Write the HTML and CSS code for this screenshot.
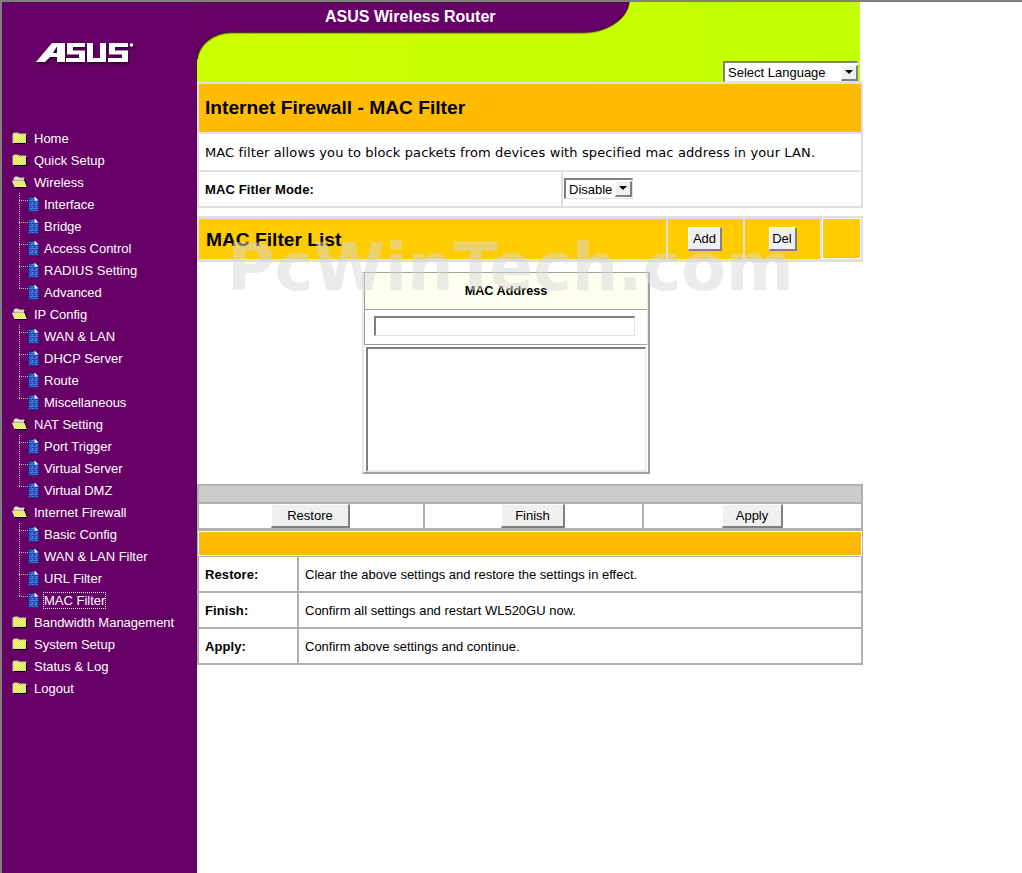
FILE: index.html
```html
<!DOCTYPE html>
<html lang="en">
<head>
<meta charset="utf-8">
<title>ASUS Wireless Router</title>
<link rel="stylesheet" href="styles.css">
</head>
<body>
<svg class="defs" width="0" height="0" aria-hidden="true">
  <defs>
    <pattern id="dither" width="2" height="2" patternUnits="userSpaceOnUse">
      <rect width="2" height="2" fill="#ffff66"/>
      <rect width="1" height="1" fill="#d8d870"/>
      <rect x="1" y="1" width="1" height="1" fill="#d8d870"/>
    </pattern>
    <pattern id="maze" width="4" height="4" patternUnits="userSpaceOnUse">
      <rect width="4" height="4" fill="#4a7ad8"/>
      <path d="M0 1.5H3V3.5H1" fill="none" stroke="#1a3aa8" stroke-width="1"/>
    </pattern>
    <symbol id="folder" viewBox="0 0 16 12">
      <path d="M1 2L2 1H6L7 2H14V11H1Z" fill="url(#dither)" stroke="#c8c8b0"/>
      <path d="M14.5 3V11.5H1.5" fill="none" stroke="#000"/>
    </symbol>
    <symbol id="folder-open" viewBox="0 0 16 12">
      <path d="M2 2L3 1H6L7 2H12V4H2Z" fill="#e8e8d0" stroke="#c8c8b0"/>
      <path d="M0.5 5H12L15 11H3Z" fill="url(#dither)" stroke="#e8e8d0"/>
      <path d="M12.5 3L15.5 11.5H3" fill="none" stroke="#000"/>
    </symbol>
    <symbol id="doc" viewBox="0 0 11 16">
      <path d="M0.5 1.5H7L10.5 5V15.5H0.5Z" fill="url(#maze)" stroke="#1c2f80"/>
      <path d="M6.5 0.5L10.5 4.5H6.5Z" fill="#fff"/>
    </symbol>
  </defs>
</svg>
<div class="page">
  <nav class="sidebar">
    <div class="logo">
      <svg class="logo-mark" width="100" height="24" viewBox="36 42 100 24" role="img" aria-label="ASUS">
        <path fill-rule="evenodd" d="M36 62L52 43H65V62H57V57H50L45 62ZM53 53H57V47H56.500Z"/>
        <path d="M67 43H85V47H73V50.500H85V62H66V58H79V54.500H67Z"/>
        <path d="M87 43H93V58H100V43H106V62H87Z"/>
        <path d="M109 43H128V47H115V50.500H128V62H108V58H122V54.500H109Z"/>
        <circle cx="131.500" cy="45" r="1.800"/>
      </svg>
    </div>
    <ul class="tree">
      <li class="node"><svg class="ico"><use href="#folder"/></svg><span>Home</span></li>
      <li class="node"><svg class="ico"><use href="#folder"/></svg><span>Quick Setup</span></li>
      <li class="node"><svg class="ico"><use href="#folder-open"/></svg><span>Wireless</span></li>
      <li class="leaf"><svg class="branch"><path class="dots" d="M0.500 0V22M0 7.500H9"/><use href="#doc" x="9" y="3" width="11" height="16"/></svg><span>Interface</span></li>
      <li class="leaf"><svg class="branch"><path class="dots" d="M0.500 0V22M0 7.500H9"/><use href="#doc" x="9" y="3" width="11" height="16"/></svg><span>Bridge</span></li>
      <li class="leaf"><svg class="branch"><path class="dots" d="M0.500 0V22M0 7.500H9"/><use href="#doc" x="9" y="3" width="11" height="16"/></svg><span>Access Control</span></li>
      <li class="leaf"><svg class="branch"><path class="dots" d="M0.500 0V22M0 7.500H9"/><use href="#doc" x="9" y="3" width="11" height="16"/></svg><span>RADIUS Setting</span></li>
      <li class="leaf"><svg class="branch"><path class="dots" d="M0.500 0V8M0 7.500H9"/><use href="#doc" x="9" y="3" width="11" height="16"/></svg><span>Advanced</span></li>
      <li class="node"><svg class="ico"><use href="#folder-open"/></svg><span>IP Config</span></li>
      <li class="leaf"><svg class="branch"><path class="dots" d="M0.500 0V22M0 7.500H9"/><use href="#doc" x="9" y="3" width="11" height="16"/></svg><span>WAN &amp; LAN</span></li>
      <li class="leaf"><svg class="branch"><path class="dots" d="M0.500 0V22M0 7.500H9"/><use href="#doc" x="9" y="3" width="11" height="16"/></svg><span>DHCP Server</span></li>
      <li class="leaf"><svg class="branch"><path class="dots" d="M0.500 0V22M0 7.500H9"/><use href="#doc" x="9" y="3" width="11" height="16"/></svg><span>Route</span></li>
      <li class="leaf"><svg class="branch"><path class="dots" d="M0.500 0V8M0 7.500H9"/><use href="#doc" x="9" y="3" width="11" height="16"/></svg><span>Miscellaneous</span></li>
      <li class="node"><svg class="ico"><use href="#folder-open"/></svg><span>NAT Setting</span></li>
      <li class="leaf"><svg class="branch"><path class="dots" d="M0.500 0V22M0 7.500H9"/><use href="#doc" x="9" y="3" width="11" height="16"/></svg><span>Port Trigger</span></li>
      <li class="leaf"><svg class="branch"><path class="dots" d="M0.500 0V22M0 7.500H9"/><use href="#doc" x="9" y="3" width="11" height="16"/></svg><span>Virtual Server</span></li>
      <li class="leaf"><svg class="branch"><path class="dots" d="M0.500 0V8M0 7.500H9"/><use href="#doc" x="9" y="3" width="11" height="16"/></svg><span>Virtual DMZ</span></li>
      <li class="node"><svg class="ico"><use href="#folder-open"/></svg><span>Internet Firewall</span></li>
      <li class="leaf"><svg class="branch"><path class="dots" d="M0.500 0V22M0 7.500H9"/><use href="#doc" x="9" y="3" width="11" height="16"/></svg><span>Basic Config</span></li>
      <li class="leaf"><svg class="branch"><path class="dots" d="M0.500 0V22M0 7.500H9"/><use href="#doc" x="9" y="3" width="11" height="16"/></svg><span>WAN &amp; LAN Filter</span></li>
      <li class="leaf"><svg class="branch"><path class="dots" d="M0.500 0V22M0 7.500H9"/><use href="#doc" x="9" y="3" width="11" height="16"/></svg><span>URL Filter</span></li>
      <li class="leaf"><svg class="branch"><path class="dots" d="M0.500 0V8M0 7.500H9"/><use href="#doc" x="9" y="3" width="11" height="16"/></svg><span class="current">MAC Filter</span></li>
      <li class="node"><svg class="ico"><use href="#folder"/></svg><span>Bandwidth Management</span></li>
      <li class="node"><svg class="ico"><use href="#folder"/></svg><span>System Setup</span></li>
      <li class="node"><svg class="ico"><use href="#folder"/></svg><span>Status &amp; Log</span></li>
      <li class="node"><svg class="ico"><use href="#folder"/></svg><span>Logout</span></li>
    </ul>
  </nav>

  <main class="main">
    <header class="banner">
      <svg class="banner-art" width="663" height="80" viewBox="197 2 663 80" aria-hidden="true">
        <defs>
          <linearGradient id="lime" x1="0" x2="1" y1="0" y2="0">
            <stop offset="0" stop-color="#ccff00"/>
            <stop offset="1" stop-color="#c2ff00"/>
          </linearGradient>
        </defs>
        <rect x="197" y="2" width="663" height="80" fill="url(#lime)"/>
        <path class="glow" d="M197 2H629C627 20 606 33 583 33H232C213 33 199 45 197 60Z"/>
        <path class="edge" d="M197 2H629C627 20 606 32 583 32H232C213 32 199 44 197 59Z"/>
        <rect x="190" y="0" width="7" height="70" fill="#660066"/>
        <rect x="190" y="0" width="445" height="2" fill="#660066"/>
      </svg>
      <div class="banner-title">ASUS Wireless Router</div>
      <div class="lang">
        <select class="select select-lang"><option>Select Language</option></select>
        <span class="arrow"></span>
      </div>
    </header>

    <section class="panel">
      <h1 class="title-row">Internet Firewall - MAC Filter</h1>
      <p class="desc-row">MAC filter allows you to block packets from devices with specified mac address in your LAN.</p>
      <div class="mode-row">
        <div class="mode-label">MAC Fitler Mode:</div>
        <div class="mode-value">
          <div class="mode-select">
            <select class="select select-mode"><option>Disable</option></select>
            <span class="arrow"></span>
          </div>
        </div>
      </div>
    </section>

    <section class="list-head">
      <h2 class="list-title">MAC Filter List</h2>
      <div class="list-cell"><button class="btn btn-add" type="button">Add</button></div>
      <div class="list-cell"><button class="btn btn-del" type="button">Del</button></div>
      <div class="list-cell list-end"></div>
    </section>

    <div class="mac-wrap">
      <div class="mac-box">
        <div class="mac-inner">
          <div class="mac-head">MAC Address</div>
          <div class="mac-input"><input class="mac-field" type="text"></div>
        </div>
        <textarea class="mac-area"></textarea>
      </div>
    </div>

    <section class="actions">
      <div class="band"></div>
      <div class="btn-row">
        <div class="btn-cell"><button class="btn btn-restore" type="button">Restore</button></div>
        <div class="btn-cell"><button class="btn btn-finish" type="button">Finish</button></div>
        <div class="btn-cell"><button class="btn btn-apply" type="button">Apply</button></div>
      </div>
      <div class="orange"></div>
      <div class="info-row"><div class="info-key">Restore:</div><div class="info-val">Clear the above settings and restore the settings in effect.</div></div>
      <div class="info-row"><div class="info-key">Finish:</div><div class="info-val">Confirm all settings and restart WL520GU now.</div></div>
      <div class="info-row"><div class="info-key">Apply:</div><div class="info-val">Confirm above settings and continue.</div></div>
    </section>
  </main>
</div>
<div class="watermark">PcWinTech.com</div>
</body>
</html>
```

FILE: styles.css
```css
* { box-sizing: border-box; }

html, body { margin: 0; padding: 0; }

body {
  position: relative;
  height: 873px;
  overflow: hidden;
  background: #fff;
  color: #000;
  font-family: "Liberation Sans", Arial, sans-serif;
  font-size: 13px;
}

.defs { position: absolute; }

.page {
  display: flex;
  height: 873px;
  border-top: 2px solid #808080;
  border-left: 2px solid #808080;
}

/* sidebar */
.sidebar {
  width: 195px;
  flex: none;
  background: #660066;
  color: #fff;
}

.logo { height: 125px; padding: 40px 0 0 34px; }

.logo-mark {
  display: block;
  fill: #fff;
  filter: drop-shadow(1px 2px 1px rgba(30, 0, 30, .7));
}

.tree { list-style: none; margin: 0; padding: 0; }

.node, .leaf { display: flex; align-items: center; height: 22px; }

.node { padding-left: 10px; }

.leaf { padding-left: 17px; }

.ico { width: 16px; height: 12px; margin-right: 6px; flex: none; }

.branch { width: 25px; height: 22px; flex: none; }

.dots { fill: none; stroke: #c8b8c8; stroke-dasharray: 1 1; }

.current { outline: 1px dotted #e8e8e8; }

/* main column */
.main { width: 666px; flex: none; }

.banner { display: grid; width: 663px; height: 80px; }

.banner-art, .banner-title, .lang { grid-area: 1 / 1; }

.banner-art { display: block; }

.glow { fill: #660066; stroke: #8a8a10; stroke-width: 2; stroke-opacity: .6; }

.edge { fill: #660066; stroke: #3c1a20; stroke-width: 1; }

.banner-title {
  justify-self: start;
  margin: 6px 0 0 128px;
  height: 18px;
  line-height: 18px;
  color: #fff;
  font-size: 16px;
  font-weight: bold;
}

.lang {
  position: relative;
  justify-self: end;
  align-self: end;
  width: 135px;
  height: 21px;
  margin-right: 2px;
}

.select {
  display: block;
  width: 100%;
  height: 100%;
  padding: 0 0 0 3px;
  appearance: none;
  background: #fff;
  border-style: solid;
  border-width: 2px 1px 1px 2px;
  border-color: #808080 #e0e0e0 #e0e0e0 #808080;
  border-radius: 0;
  color: #000;
  font-family: inherit;
  font-size: 13px;
}

.arrow {
  position: absolute;
  top: 4px;
  right: 0;
  width: 17px;
  height: 16px;
  background: #f0f0f0;
  border-style: solid;
  border-width: 1px 2px 2px 1px;
  border-color: #fff #808080 #808080 #fff;
}

.arrow::after {
  content: "";
  position: absolute;
  top: 4px;
  left: 3px;
  border-style: solid;
  border-width: 4px 4px 0;
  border-color: #000 transparent transparent;
}

.panel {
  display: grid;
  grid-template-rows: 48px 36px 34px;
  row-gap: 2px;
  border: 2px solid #e0e0e0;
  background: #e0e0e0;
}

.title-row {
  margin: 0;
  padding-left: 6px;
  background: #ffbb00;
  font-size: 19.2px;
  font-weight: bold;
  line-height: 48px;
}

.desc-row {
  margin: 0;
  padding-left: 6px;
  background: #fff;
  font-family: "DejaVu Sans", Verdana, sans-serif;
  font-size: 13px;
  letter-spacing: .12px;
  line-height: 38px;
  color: #000;
}

.mode-row {
  display: grid;
  grid-template-columns: 362px 298px;
  grid-template-rows: 34px;
  column-gap: 2px;
}

.mode-label {
  padding-left: 6px;
  background: #fff;
  font-weight: bold;
  letter-spacing: .13px;
  line-height: 36px;
}

.mode-value { background: #fff; padding: 6px 0 0 1px; }

.mode-select { position: relative; width: 69px; height: 21px; }

.mode-select .arrow { top: 3px; right: 1px; }

.list-head {
  display: grid;
  grid-template-columns: 467px 75px 75px 39px;
  grid-template-rows: 40px;
  column-gap: 2px;
  height: 46px;
  margin-top: 8px;
  border-style: solid;
  border-width: 3px 2px;
  border-color: #e0e0e0;
  background: #e0e0e0;
}

.list-title {
  margin: 0;
  padding-left: 7px;
  background: #ffcc00;
  font-size: 19.2px;
  font-weight: bold;
  line-height: 42px;
}

.list-cell {
  display: flex;
  align-items: center;
  justify-content: center;
  background: #ffcc00;
}

.list-end { margin-top: -1px; border: 1px solid #fff; }

.btn {
  height: 24px;
  padding: 0;
  background: #f0f0f0;
  border-style: solid;
  border-width: 1px 2px 2px 1px;
  border-color: #fff #808080 #808080 #fff;
  border-radius: 0;
  color: #000;
  font-family: inherit;
  font-size: 13px;
}

.btn-add { width: 34px; margin-right: 1px; }
.btn-del { width: 28px; }
.btn-restore { width: 79px; margin-right: 1px; }
.btn-finish { width: 64px; margin-right: 1px; }
.btn-apply { width: 61px; }

.mac-wrap { height: 222px; padding: 10px 0 0 165px; }

.mac-box {
  width: 288px;
  height: 202px;
  border-style: solid;
  border-width: 1px 2px 2px 2px;
  border-color: #a0a0a0 #a0a0a0 #a0a0a0 #e8e8e8;
}

.mac-inner { border-left: 1px solid #a0a0a0; border-right: 1px solid #e8e8e8; }

.mac-head {
  height: 37px;
  border-bottom: 1px solid #a0a0a0;
  background: #fffff0;
  font-size: 12.7px;
  font-weight: bold;
  line-height: 36px;
  text-align: center;
}

.mac-input { height: 35px; padding: 6px 0 0 9px; border-bottom: 1px solid #a0a0a0; }

.mac-field {
  display: block;
  width: 261px;
  height: 20px;
  padding: 0;
  border-style: solid;
  border-width: 2px 1px 1px 2px;
  border-color: #808080 #e0e0e0 #e0e0e0 #808080;
  background: #fff;
}

.mac-area {
  display: block;
  width: 280px;
  height: 125px;
  margin: 2px 0 0 2px;
  padding: 0;
  resize: none;
  border-style: solid;
  border-width: 2px 1px 2px 2px;
  border-color: #808080 #e8e8e8 #e8e8e8 #808080;
  background: #fff;
  outline: none;
}

.actions {
  display: grid;
  border: 2px solid #b0b0b0;
  background: #b0b0b0;
}

.band { height: 16px; background: #cccccc; }

.btn-row {
  display: grid;
  grid-template-columns: 224px 217px 217px;
  column-gap: 2px;
  margin-top: 2px;
}

.btn-cell { display: flex; justify-content: center; height: 24px; background: #fff; }

.orange {
  height: 25px;
  margin: 3px -1px 0;
  border: 1px solid #fff;
  background: #ffbb00;
}

.info-row {
  display: grid;
  grid-template-columns: 98px 562px;
  grid-template-rows: 34px;
  column-gap: 2px;
  height: 34px;
  margin-top: 2px;
}

.orange + .info-row { margin-top: 1px; }

.info-key, .info-val {
  padding-left: 6px;
  background: #fff;
  line-height: 36px;
}

.info-key { font-weight: bold; letter-spacing: .1px; }

.watermark {
  position: absolute;
  top: 226px;
  left: 227px;
  color: rgba(215, 215, 215, .5);
  font-family: "DejaVu Sans", Verdana, sans-serif;
  font-size: 65px;
  font-weight: bold;
  line-height: 84px;
  white-space: nowrap;
  pointer-events: none;
}
```
